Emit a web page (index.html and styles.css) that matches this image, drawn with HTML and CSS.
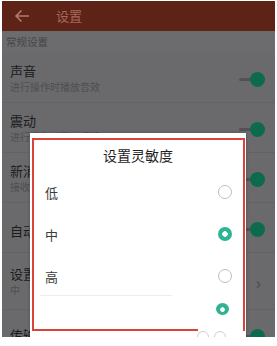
FILE: index.html
```html
<!DOCTYPE html>
<html lang="zh-CN">
<head>
<meta charset="utf-8">
<title>设置</title>
<link rel="stylesheet" href="styles.css">
</head>
<body>
<div class="page">
  <div class="screen">
    <header class="appbar">
      <svg class="back" width="16" height="14" viewBox="0 0 16 14"><path d="M15 7H2M7.5 1.5L2 7l5.5 5.5" fill="none" stroke="#b6786a" stroke-width="1.6"/></svg>
      <span class="appbar-title">设置</span>
    </header>
    <div class="section">常规设置</div>
    <ul class="list">
      <li class="row"><div class="texts"><div class="title">声音</div><div class="sub">进行操作时播放音效</div></div><span class="switch"></span></li>
      <li class="row"><div class="texts"><div class="title">震动</div><div class="sub">进行操作时震动反馈</div></div><span class="switch"></span></li>
      <li class="row"><div class="texts"><div class="title">新消息通知</div><div class="sub">接收新消息通知</div></div><span class="switch"></span></li>
      <li class="row row--single"><div class="texts"><div class="title">自动更新</div></div><span class="switch"></span></li>
      <li class="row row--tall"><div class="texts"><div class="title">设置灵敏度</div><div class="sub">中</div></div><span class="chev">›</span></li>
      <li class="row"><div class="texts"><div class="title">传输设置</div></div><span class="switch"></span></li>
    </ul>

    <div class="dialog">
      <div class="mark"></div>
      <div class="mark-bottom"></div>
      <div class="dialog-title">设置灵敏度</div>
      <div class="option"><span>低</span><span class="radio"></span></div>
      <div class="option"><span>中</span><span class="radio radio--on"></span></div>
      <div class="option"><span>高</span><span class="radio"></span></div>
      <div class="divider"></div>
      <span class="blob"></span>
      <span class="ghost ghost--a"></span>
      <span class="ghost ghost--b"></span>
    </div>
  </div>
</div>
</body>
</html>
```

FILE: styles.css
```css
* { box-sizing: border-box; margin: 0; padding: 0; }
html, body { background: #ffffff; }
body { font-family: "Noto Sans CJK SC", "Noto Sans", sans-serif; }
.page { padding: 1px 2px 0 2px; }
.screen {
  position: relative;
  width: 273px;
  height: 336px;
  overflow: hidden;
  background: #6a696b;
}
.appbar {
  height: 30px;
  background: #5d2317;
  display: flex;
  align-items: center;
  padding-left: 12px;
  gap: 26px;
}
.back { display: block; }
.appbar-title { color: #a9685b; font-size: 13px; line-height: 16px; }
.section {
  height: 22px;
  padding-left: 4px;
  font-size: 10.5px;
  line-height: 22px;
  color: #464547;
  background: #6c6b6d;
}
.list { list-style: none; }
.row {
  height: 50px;
  display: flex;
  align-items: center;
  padding: 0 10px 0 8px;
  border-bottom: 1px solid #636264;
}
.row--tall { height: 57px; }
.texts { flex: 1; }
.title { font-size: 13px; line-height: 17px; color: #1c1c1c; }
.sub { font-size: 10px; line-height: 14px; color: #4f4e50; margin-top: 1px; }
.row--single .texts { padding-top: 6px; }
.switch {
  position: relative;
  width: 26px;
  height: 15px;
  margin-top: 4px;
}
.switch::before {
  content: "";
  position: absolute;
  left: 0; top: 6px;
  width: 16px; height: 3px;
  background: #525153;
  border-radius: 2px;
}
.switch::after {
  content: "";
  position: absolute;
  right: 0; top: 0;
  width: 15px; height: 15px;
  border-radius: 50%;
  background: #0e6a4f;
}
.chev { color: #4d4c4e; font-size: 18px; line-height: 18px; margin-right: 4px; margin-top: 2px; }

.dialog {
  position: absolute;
  left: 28px;
  top: 132px;
  width: 216px;
  height: 210px;
  background: #ffffff;
  overflow: hidden;
  box-shadow: 0 0 3px rgba(0,0,0,0.25);
}
.mark {
  position: absolute;
  left: 2px; top: 5px;
  width: 213px; height: 193px;
  border: 2px solid #d9433a;
  border-bottom: none;
}
.mark-bottom {
  position: absolute;
  left: 2px; top: 196px;
  width: 166px; height: 2px;
  background: #d9433a;
}
.dialog-title {
  height: 38px;
  padding-top: 12px;
  text-align: center;
  font-size: 14px;
  line-height: 20px;
  color: #1f1f1f;
}
.option {
  height: 42px;
  display: flex;
  align-items: center;
  justify-content: space-between;
  padding: 0 14px 0 15px;
  font-size: 13px;
  color: #3c3c3c;
}
.radio {
  width: 14px; height: 14px;
  border-radius: 50%;
  border: 1.5px solid #bdbdbd;
}
.radio--on {
  border: none;
  background: #2cb593 radial-gradient(circle, #ffffff 0 2.5px, transparent 3px);
}
.divider {
  margin: -2px 0 0 10px;
  width: 132px;
  height: 1px;
  background: #ececec;
}
.blob {
  position: absolute;
  left: 186px; top: 170px;
  width: 13px; height: 12px;
  border-radius: 50%;
  background: #2fb391 radial-gradient(ellipse at 50% 55%, #ffffff 0 2px, transparent 2.5px);
}
.ghost {
  position: absolute;
  top: 198px;
  width: 12px; height: 12px;
  border-radius: 50%;
  border: 1.5px solid #cfcfcf;
}
.ghost--a { left: 167px; }
.ghost--b { left: 184px; }
```
